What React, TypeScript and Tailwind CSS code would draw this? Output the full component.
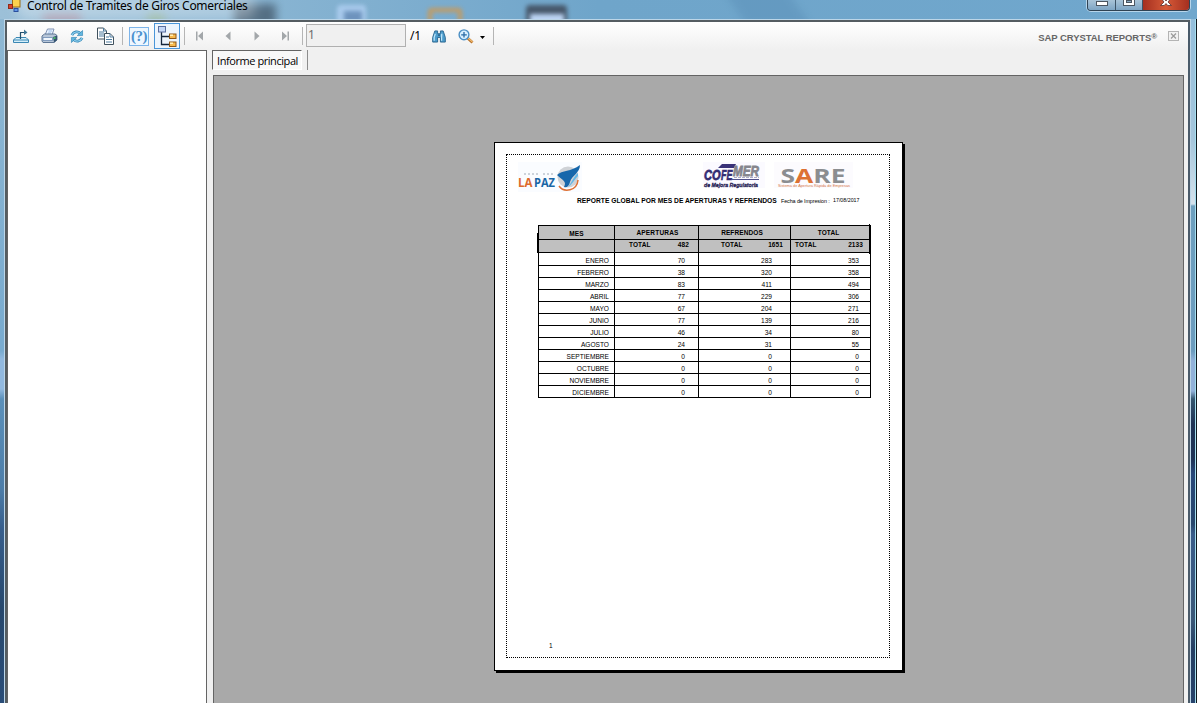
import type { ReactNode } from 'react';

const months: [string, number, number, number][] = [
  ['ENERO', 70, 283, 353],
  ['FEBRERO', 38, 320, 358],
  ['MARZO', 83, 411, 494],
  ['ABRIL', 77, 229, 306],
  ['MAYO', 67, 204, 271],
  ['JUNIO', 77, 139, 216],
  ['JULIO', 46, 34, 80],
  ['AGOSTO', 24, 31, 55],
  ['SEPTIEMBRE', 0, 0, 0],
  ['OCTUBRE', 0, 0, 0],
  ['NOVIEMBRE', 0, 0, 0],
  ['DICIEMBRE', 0, 0, 0],
];

const UI = "font-['Noto_Sans',sans-serif]";

function TitleBar() {
  return (
    <header className="relative flex h-[19px] shrink-0 justify-between overflow-hidden bg-linear-to-r from-[#9cc0d8] via-[#6fa5ca] to-[#70a7cd]">
      <div className="absolute top-[13px] left-[42px] h-3 w-10 rounded-full bg-[#a77f92] opacity-60 blur-[4px]" />
      <div className="absolute top-[13px] left-[146px] h-3 w-5 rounded-full bg-[#8fae7e] opacity-60 blur-[4px]" />
      <div className="absolute top-[4px] left-[234px] h-6 w-[42px] bg-[#43586a] opacity-75 blur-[4px]" />
      <div className="absolute top-[5px] left-[337px] h-5 w-[29px] rounded bg-[#a9cbed] blur-[2px]" />
      <div className="absolute top-[11px] left-[344px] h-3 w-[18px] bg-[#6d93bd] blur-[2px]" />
      <div className="absolute top-[8px] left-[428px] h-5 w-[34px] rounded-sm border-4 border-[#c79a5c] blur-[2px]" />
      <div className="absolute top-[5px] left-[526px] h-5 w-[41px] rounded-sm bg-[#47586b] blur-[2px]" />
      <div className="absolute top-[14px] left-[530px] h-3 w-[34px] bg-[#bcd5f4] blur-[2px]" />
      <div className="absolute -top-3 left-[735px] h-10 w-16 skew-x-[35deg] bg-[#5b90b8] opacity-50 blur-[5px]" />
      <div className="absolute -top-2 left-4 h-7 w-[240px] rounded-full bg-white opacity-30 blur-[6px]" />
      <div className="relative flex pl-[7px]">
        <svg className="h-[13px] w-[14px]" viewBox="0 0 14 13">
          <rect x="5.500" y="-1" width="7.500" height="8" fill="#fbd24e" stroke="#9a6c12" />
          <rect x="1.500" y="4.500" width="4" height="4" fill="#d8442a" stroke="#8f2a1a" />
          <rect x="7" y="8.500" width="4" height="3" fill="#5f95e8" stroke="#2a4f9c" />
        </svg>
        <span className={`${UI} ml-[6px] -mt-[2px] text-[12px] leading-[16px] tracking-[-0.3px] whitespace-nowrap text-black`}>
          Control de Tramites de Giros Comerciales
        </span>
      </div>
      <div className="relative mr-[7px] flex h-[11px] w-[103px] overflow-hidden rounded-b-[4px] border border-t-0 border-[#2f4253] shadow-[0_0_0_1px_#b7d5ea]">
        <div className="flex w-[28px] justify-center border-r border-[#3d5468] bg-linear-to-b from-[#a9c4d8] to-[#7ea5c4]">
          <div className="mt-px h-[5px] w-[12px] border border-[#4b5560] bg-white" />
        </div>
        <div className="flex w-[27px] justify-center border-r border-[#3d5468] bg-linear-to-b from-[#a9c4d8] to-[#7ea5c4]">
          <div className="-mt-[3px] h-[9px] w-[12px] border border-[#4b5560] bg-white p-[2px]">
            <div className="h-full w-full border border-[#4b5560] bg-[#88a9c3]" />
          </div>
        </div>
        <div className="flex flex-1 justify-center bg-linear-to-r from-[#a52f20] via-[#d65a38] to-[#a52f20]">
          <svg className="h-[8px] w-[14px]" viewBox="0 0 14 8">
            <path d="M4 -3L7 1L10 -3H13L9 2L12.500 5.500H8.700L7 3.500L5.300 5.500H1.500L5 2L1 -3Z" fill="#fff" stroke="#5a3030" strokeWidth=".8" />
          </svg>
        </div>
      </div>
    </header>
  );
}

function Tool({ children }: { children: ReactNode }) {
  return <div className="flex w-7 shrink-0 items-center justify-center">{children}</div>;
}

function Sep() {
  return <div className="my-auto h-[18px] w-px shrink-0 bg-[#b5b5b5]" />;
}

function ExportIcon() {
  return (
    <svg className="size-4" viewBox="0 0 16 16" fill="none">
      <path d="M3 9.500H13L15.500 12V14.500H.5V12Z" fill="#d5effa" stroke="#3b87b3" />
      <path d="M.5 12H15.500" stroke="#3b87b3" />
      <path d="M7.500 11V4.500H12" stroke="#244f6b" strokeWidth="1.200" />
      <path d="M11 1.500L14.500 4.500L11 7Z" fill="#3f7697" />
    </svg>
  );
}

function PrintIcon() {
  return (
    <svg className="h-4 w-[17px]" viewBox="0 0 17 16" fill="none">
      <path d="M4 7L6.500 1H13L11 7" fill="#e8f3ff" stroke="#8193b5" />
      <path d="M7.500 3H11M7 5H10" stroke="#9dbce6" />
      <path d="M1 8L3.500 6H14L16 7.500V12L13 14.500H2L1 13Z" fill="#b7c6d8" stroke="#5e7694" />
      <path d="M12 9L16 7.500V12L13 14.500Z" fill="#35536f" />
      <path d="M2 9.500H11.500V12.500H2Z" fill="#f0f6fc" stroke="#5f7fab" strokeWidth=".7" />
      <rect x="12.500" y="9" width="2" height="2" fill="#49b66a" />
    </svg>
  );
}

function RefreshIcon() {
  return (
    <svg className="h-[13px] w-[14px]" viewBox="0 0 15 14" fill="none">
      <path d="M2 5.500C4 1.500 8.500 1.200 11 3.500" stroke="#3285b4" strokeWidth="3" />
      <path d="M2 5.500C4 1.500 8.500 1.200 11 3.500" stroke="#8fd0ef" strokeWidth="1.300" />
      <path d="M13.500 .5V6H7.800Z" fill="#61b6df" stroke="#3285b4" strokeWidth=".7" />
      <path d="M13 8.500C11 12.500 6.500 12.800 4 10.500" stroke="#3285b4" strokeWidth="3" />
      <path d="M13 8.500C11 12.500 6.500 12.800 4 10.500" stroke="#8fd0ef" strokeWidth="1.300" />
      <path d="M1.500 13.500V8H7.200Z" fill="#61b6df" stroke="#3285b4" strokeWidth=".7" />
    </svg>
  );
}

function CopyIcon() {
  return (
    <svg className="h-[18px] w-[17px]" viewBox="0 0 17 18" fill="none">
      <path d="M.5 1H6.500L9.500 4V12H.5Z" fill="#fff" stroke="#40515d" />
      <path d="M6.500 1V4H9.500M2 5H7M2 7H7M2 9H7" stroke="#4f7da0" />
      <path d="M7.500 6.500H13L16.500 10V17.500H7.500Z" fill="#fff" stroke="#40515d" />
      <path d="M13 6.500V10H16.500M9 10H12M9 12.500H15M9 15H15" stroke="#4f7da0" />
    </svg>
  );
}

function TreeIcon() {
  return (
    <svg className="h-[23px] w-5" viewBox="0 0 20 23" fill="none">
      <path d="M4.500 7V19.500H12M4.500 11.500H12" stroke="#14263c" strokeWidth="1.300" />
      <rect x="1.500" y="1.500" width="7" height="5.500" fill="#c5d8f7" stroke="#5a6f9f" />
      <rect x="12.500" y="9" width="6.500" height="4.500" fill="#f7ba4e" stroke="#8c5719" />
      <path d="M13 9.500H16V11H13Z" fill="#fff0ba" />
      <rect x="12.500" y="17" width="6.500" height="4.500" fill="#f7ba4e" stroke="#8c5719" />
      <path d="M13 17.500H16V19H13Z" fill="#fff0ba" />
    </svg>
  );
}

function Nav({ flip, bar }: { flip?: boolean; bar?: boolean }) {
  return (
    <svg className={flip ? 'h-[10px] w-2 -scale-x-100' : 'h-[10px] w-2'} viewBox="0 0 8 10">
      {bar ? (
        <path d="M0 .5H1.500V9.500H0ZM7 .5V9.500L2 5Z" fill="#a3a7aa" />
      ) : (
        <path d="M6.500 .5V9.500L1.500 5Z" fill="#a3a7aa" />
      )}
    </svg>
  );
}

function Binoculars() {
  return (
    <svg className="h-[13px] w-[14px]" viewBox="0 0 15 14">
      <path d="M3 1H6V4H9V1H12L14.300 8V13H9V8H6V13H.7V8Z" fill="#4c9ccc" stroke="#28658f" />
      <path d="M3.500 4L2.300 8V11.500M10.500 4L10.300 8V11.500" stroke="#c1e7fa" strokeWidth="1.300" fill="none" />
      <path d="M6.500 5.500H8.500" stroke="#183e5c" />
    </svg>
  );
}

function Magnifier() {
  return (
    <svg className="h-[15px] w-4" viewBox="0 0 16 15" fill="none">
      <path d="M9.500 9L14.500 13.500" stroke="#b66f27" strokeWidth="2.800" />
      <path d="M10 9L14.500 13" stroke="#f1bc70" strokeWidth="1.200" />
      <circle cx="6" cy="5.800" r="4.900" fill="#d8f0ff" stroke="#4b8fc4" strokeWidth="1.400" />
      <path d="M6 3V8.600M3.200 5.800H8.800" stroke="#2a6ba5" strokeWidth="1.300" />
    </svg>
  );
}

function Toolbar() {
  return (
    <div className="flex h-[28px] shrink-0 bg-linear-to-b from-white to-[#f0f0f0]">
      <Tool><ExportIcon /></Tool>
      <Tool><PrintIcon /></Tool>
      <Tool><RefreshIcon /></Tool>
      <Tool><CopyIcon /></Tool>
      <div className="flex w-[10px] pl-[3px]"><Sep /></div>
      <div className="my-auto flex h-[19px] w-5 items-center justify-center border border-[#7cb4ea] bg-[#eef7ff] font-['Liberation_Serif',serif] text-[15px] leading-none font-bold tracking-[-0.5px] text-[#4b91cf]">
        (?)
      </div>
      <div className="mt-px ml-[5px] flex h-[26px] w-[26px] items-center justify-center border border-[#4a96d9] bg-[#edf5fd]">
        <TreeIcon />
      </div>
      <div className="flex w-[6px] pl-[4px]"><Sep /></div>
      <Tool><Nav bar /></Tool>
      <Tool><Nav /></Tool>
      <div className="w-px" />
      <Tool><Nav flip /></Tool>
      <Tool><Nav flip bar /></Tool>
      <div className="flex w-[7px] pl-[3px]"><Sep /></div>
      <div className={`${UI} mt-[2px] h-[23px] w-[100px] border border-[#b0b0b0] bg-[#f0f0f0] pl-[1px] text-[12px] leading-[20px] text-[#6d6d6d]`}>1</div>
      <span className={`${UI} w-[19px] pl-[4px] text-[12px] leading-[28px] tracking-[-0.3px] text-black`}>/1</span>
      <div className="flex w-[27px] items-center justify-center"><Binoculars /></div>
      <div className="flex w-[28px] items-center justify-center"><Magnifier /></div>
      <div className="flex w-[13px] items-center">
        <svg className="mt-[2px] h-[3px] w-[5px]" viewBox="0 0 5 3"><path d="M0 0H5L2.500 3Z" fill="#000" /></svg>
      </div>
      <Sep />
      <div className="ml-auto flex items-center pr-[9px]">
        <span className="mt-[3px] flex font-['Liberation_Sans',sans-serif] text-[9.5px] leading-[10px] font-bold tracking-[-0.07px] whitespace-nowrap text-[#666]">
          SAP CRYSTAL REPORTS<span className="-mt-[1px] text-[8px]">®</span>
        </span>
        <svg className="ml-[11px] size-[11px]" viewBox="0 0 11 11" fill="none">
          <rect x=".5" y=".5" width="10" height="9" fill="#f2f2f2" stroke="#b4b4b4" />
          <path d="M3 2.500L8 7.500M8 2.500L3 7.500" stroke="#9a9a9a" strokeWidth="1.200" />
        </svg>
      </div>
    </div>
  );
}

function LaPazLogo() {
  return (
    <svg className="h-[30px] w-[64px]" viewBox="0 0 64 30">
      <rect width="64" height="30" fill="#fafcff" />
      <path d="M6 12H22M25 12H35" stroke="#8896a5" strokeWidth=".8" strokeDasharray="2 2" />
      <circle cx="50" cy="15" r="10.500" fill="#cfd2d6" />
      <path d="M39 13C44 8 53 10 62 3C62 11 54 13 52 20C51 24 49 26 46 25C49 19 45 19 39 13Z" fill="#1667ab" />
      <path d="M60 11C56 14 54 20 50 25C53 24 57 17 60 14Z" fill="#63b8e8" />
      <path d="M41 24C46 31 59 29 60 18" fill="none" stroke="#de7135" strokeWidth="1.500" />
      <g fontFamily="Open Sans, sans-serif" fontWeight="700" fontSize="12.500">
        <text x="0" y="24.500" textLength="14.500" lengthAdjust="spacingAndGlyphs" fill="#dd6a2b">LA</text>
        <text x="16" y="24.500" textLength="21" lengthAdjust="spacingAndGlyphs" fill="#1b66a5">PAZ</text>
      </g>
    </svg>
  );
}

function CofemerLogo() {
  return (
    <svg className="h-[28px] w-[62px]" viewBox="0 0 62 28">
      <rect width="62" height="26" fill="#fbfaff" />
      <path d="M19 2H33L31 6H15Z" fill="#3a3378" />
      <g fontFamily="Liberation Sans, sans-serif" fontWeight="700" fontStyle="italic">
        <text x="1" y="18" fontSize="15" textLength="16.500" lengthAdjust="spacingAndGlyphs" fill="#342d73" stroke="#342d73" strokeWidth=".8">CO</text>
        <text x="18" y="18" fontSize="14" textLength="11.500" lengthAdjust="spacingAndGlyphs" fill="#342d73" stroke="#342d73" strokeWidth=".6">FE</text>
        <text x="30" y="13.500" fontSize="14" textLength="26" lengthAdjust="spacingAndGlyphs" fill="#85858d" stroke="#85858d" strokeWidth=".8">MER</text>
        <text x="1" y="24.800" fontSize="6" textLength="54" lengthAdjust="spacingAndGlyphs" fill="#262153" stroke="#262153" strokeWidth=".3">de Mejora Regulatoria</text>
      </g>
      <path d="M29 17.500H56" stroke="#51518a" strokeWidth="1" />
      <path d="M31 15.500H56" stroke="#77779d" strokeWidth=".6" strokeDasharray="3 1" />
    </svg>
  );
}

function SareLogo() {
  return (
    <svg className="h-[26px] w-[79px]" viewBox="0 0 79 26">
      <rect width="79" height="26" fill="#fcfbfe" />
      <g fontFamily="Open Sans, sans-serif" fontWeight="700" fontSize="19.500">
        <text x="6.500" y="21" textLength="65" lengthAdjust="spacingAndGlyphs" fill="#8b8d90">S<tspan fill="#dd7133">A</tspan>RE</text>
      </g>
      <text x="4" y="25" fontFamily="Liberation Sans, sans-serif" fontSize="3.600" textLength="72" lengthAdjust="spacingAndGlyphs" fill="#d57545">Sistema de Apertura Rápida de Empresas</text>
    </svg>
  );
}

const cell = 'border-r border-b border-black';

function ReportTable() {
  return (
    <div className="relative mt-[17px] ml-[31px] w-[333px] border-t border-l border-black text-[6.6px] leading-[12px]">
      <div className="absolute top-[7px] -left-[2px] h-[20px] w-px bg-black" />
      <div className="absolute -top-[2px] right-[1px] h-[30px] w-px bg-black" />
      <div className="grid grid-cols-[76px_84px_92px_80px] grid-rows-[14px_13px] bg-[#c0c0c0] text-[6.5px] font-bold tracking-[0.1px]">
        <div className={`${cell} pt-[2px] text-center`}>MES</div>
        <div className={`${cell} pt-px pl-[2px] text-center tracking-[0.2px]`}>APERTURAS</div>
        <div className={`${cell} pt-px pr-[5px] text-center`}>REFRENDOS</div>
        <div className={`${cell} pt-px pr-[4px] text-center`}>TOTAL</div>
        <div className={cell} />
        <div className={`${cell} flex justify-between pr-[9px] pl-[14px] leading-[10px]`}><span>TOTAL</span><span>482</span></div>
        <div className={`${cell} flex justify-between pr-[7px] pl-[22px] leading-[10px]`}><span>TOTAL</span><span>1651</span></div>
        <div className={`${cell} flex justify-between pr-[7px] pl-[4px] leading-[10px]`}><span>TOTAL</span><span>2133</span></div>
      </div>
      <div className="grid grid-cols-[76px_84px_92px_80px] grid-rows-[13px] auto-rows-[12px] text-right">
        {months.map(([name, a, r, t]) => (
          <div key={name} className="contents">
            <div className={`${cell} flex items-end justify-end pr-[5px] leading-[9px]`}>{name}</div>
            <div className={`${cell} flex items-end justify-end pr-[13px] leading-[9px]`}>{a}</div>
            <div className={`${cell} flex items-end justify-end pr-[18px] leading-[9px]`}>{r}</div>
            <div className={`${cell} flex items-end justify-end pr-[11px] leading-[9px]`}>{t}</div>
          </div>
        ))}
      </div>
    </div>
  );
}

function ReportPage() {
  return (
    <div className="h-[529px] w-[409px] border border-black bg-white p-[11px] font-['Liberation_Sans',sans-serif] text-black shadow-[2px_2px_0_0_#000]">
      <div className="flex h-[504px] w-[384px] flex-col border border-dotted border-black">
        <div className="flex h-[35px] pl-[11px]">
          <div className="pt-[7px]"><LaPazLogo /></div>
          <div className="pt-[7px] pl-[121px]"><CofemerLogo /></div>
          <div className="pt-[7px] pl-[9px]"><SareLogo /></div>
        </div>
        <div className="mt-[5px] mb-px flex h-[12px] items-center pl-[70px] whitespace-nowrap">
          <span className="w-[204px] text-[6.7px] font-bold tracking-[0.01px]">REPORTE GLOBAL POR MES DE APERTURAS Y REFRENDOS</span>
          <span className="w-[52px] text-[5.4px] tracking-[-0.1px]">Fecha de Impresion :</span>
          <span className="text-[5.3px]">17/08/2017</span>
        </div>
        <ReportTable />
        <div className="mt-auto mb-[6px] pl-[42px] text-[6.5px] leading-[10px]">1</div>
      </div>
    </div>
  );
}

export default function App() {
  return (
    <div className="flex h-[703px] w-[1197px] flex-col overflow-hidden bg-[#7aabd0]">
      <TitleBar />
      <div className="flex min-h-0 flex-1">
        <div className="w-[4px] bg-[linear-gradient(to_bottom,#8fb8d3_0px,#79abcf_320px,#79abcf_332px,#92b9df_340px,#92b9df_370px,#5b90ba_380px,#4d7da8_470px,#375e8c_510px,#27486d_590px,#2a4d78_100%)]" />
        <div className="w-px bg-[#bcd6e8]" />
        <div className="flex min-w-0 flex-1 flex-col border-t border-[#bcd6e8] bg-[#555d62] pt-[2px] pl-[2px]">
          <div className="flex min-h-0 flex-1">
            <div className="flex min-w-0 flex-1 flex-col bg-[#f0f0f0]">
              <Toolbar />
              <div className="flex min-h-0 flex-1">
                <aside className="w-[200px] border border-b-0 border-[#646464] bg-white" />
                <main className="flex min-w-0 flex-1 flex-col pr-[4px] pl-[6px]">
                  <div className="flex h-[25px]">
                    <div className="-ml-px h-[20px] w-[90px] border border-t-[#646464] border-r-white border-b-white border-l-[#646464] bg-[#f8f8f8] pl-[4px] font-['Open_Sans','Noto_Sans',sans-serif] text-[11px] leading-[20px] tracking-[-0.43px] whitespace-nowrap text-black">
                      Informe principal
                    </div>
                    <div className="ml-[5px] h-[20px] w-px bg-[#8c8c8c]" />
                  </div>
                  <section className="flex flex-1 border border-b-0 border-[#646464] bg-[#a9a9a9] pt-[66px] pl-[280px]">
                    <ReportPage />
                  </section>
                </main>
              </div>
            </div>
            <div className="w-[2px] bg-[#4a5b6a]" />
          </div>
        </div>
        <div className="w-px bg-[#bcd6e8]" />
        <div className="w-[4px] bg-[linear-gradient(to_bottom,#94bfdc_0px,#a5c6dc_120px,#d5e2ec_185px,#6ea0bf_187px,#6c9cbe_332px,#92b2da_342px,#92b2da_372px,#34566f_380px,#1f3355_405px,#1f3355_440px,#27487a_455px,#27466c_505px,#395c8a_515px,#3a5878_600px,#243f63_630px,#27436b_100%)]" />
        <div className="w-px bg-[#a5dff0]" />
        <div className="w-px bg-[#10181f]" />
      </div>
    </div>
  );
}
